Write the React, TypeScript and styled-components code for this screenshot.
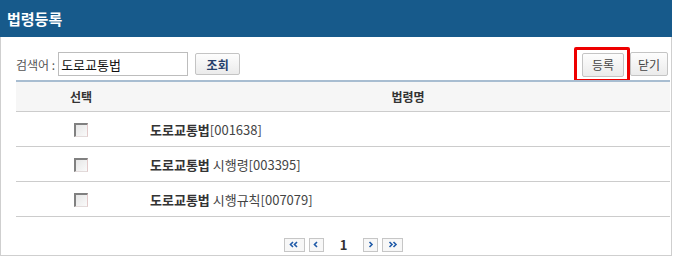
import React from "react";
import styled, { createGlobalStyle } from "styled-components";

const GlobalStyle = createGlobalStyle`
    html, body {
        margin: 0;
        padding: 0;
        background: #ffffff;
    }
    body {
        font-family: "Noto Sans CJK KR", "Noto Sans", sans-serif;
        font-size: 12px;
        color: #333333;
    }
    * {
        box-sizing: border-box;
    }
`;

const Frame = styled.div`
    width: 672px;
    height: 256px;
    border: 1px solid #cfcfcf;
    border-top: none;
    display: flex;
    flex-direction: column;
    background: #ffffff;
`;

const TitleBar = styled.div`
    height: 37px;
    flex-shrink: 0;
    background-color: #175a8b;
    color: #ffffff;
    font-size: 15px;
    font-weight: 700;
    display: flex;
    align-items: center;
    padding-left: 7px;
    margin: 0 -1px;
`;

const Body = styled.div`
    padding: 15px 0 0 15px;
    display: flex;
    flex-direction: column;
`;

const Toolbar = styled.div`
    display: flex;
    align-items: center;
    height: 24px;
    margin-bottom: 4px;
    padding-right: 3px;
`;

const Label = styled.span`
    color: #555555;
    font-size: 12px;
    margin-right: 3px;
`;

const SearchInput = styled.input`
    width: 130px;
    height: 24px;
    border: 1px solid #bdbdbd;
    padding: 0 2px;
    font-family: inherit;
    font-size: 13px;
    color: #111111;
    outline: none;
`;

const Button = styled.button<{ $bold?: boolean }>`
    height: 22px;
    padding: 0;
    border: 1px solid #c4c4c4;
    border-radius: 2px;
    background: linear-gradient(#fdfdfd, #ebebeb);
    font-family: inherit;
    font-size: 12px;
    white-space: nowrap;
    font-weight: ${props => (props.$bold ? 700 : 400)};
    color: ${props => (props.$bold ? "#253f6b" : "#444444")};
    display: flex;
    align-items: center;
    justify-content: center;
    cursor: pointer;
`;

const SearchButton = styled(Button)`
    width: 45px;
    margin-left: 7px;
`;

const Spacer = styled.div`
    flex: 1;
`;

const Highlight = styled.div`
    border: 3px solid #ee0000;
    border-radius: 2px;
    padding: 3px 3px 2px 5px;
    display: flex;
`;

const ActionButton = styled(Button)`
    height: 24px;
    width: 42px;
`;

const CloseButton = styled(ActionButton)`
    width: 38px;
`;

const Table = styled.div`
    border-top: 2px solid #a8bdd1;
    margin-right: 1px;
`;

const HeadRow = styled.div`
    display: grid;
    grid-template-columns: 130px 1fr;
    height: 30px;
    background: #f6f6f6;
    border-bottom: 1px solid #cccccc;
    font-weight: 700;
    color: #333333;
`;

const Row = styled.div`
    display: grid;
    grid-template-columns: 130px 1fr;
    height: 35px;
    border-bottom: 1px solid #cccccc;
`;

const Cell = styled.div<{ $center?: boolean }>`
    display: flex;
    align-items: center;
    justify-content: ${props => (props.$center ? "center" : "flex-start")};
    padding-left: ${props => (props.$center ? "0" : "4px")};
    font-size: 12px;
    white-space: pre;
`;

const Check = styled.span`
    width: 14px;
    height: 14px;
    border-top: 2px solid #808080;
    border-left: 2px solid #808080;
    border-right: 1px solid #e2caca;
    border-bottom: 1px solid #e2dada;
    background: linear-gradient(135deg, #e6e6e6, #fafafa);
    margin-top: 1px;
`;

const LawTitle = styled.span`
    font-size: 13px;
    color: #444444;
`;

const LawName = styled.b`
    font-weight: 700;
    color: #333333;
`;

const Pager = styled.div`
    display: flex;
    justify-content: center;
    align-items: center;
    margin-top: 18px;
    gap: 4px;
`;

const PageButton = styled.span<{ $wide?: boolean }>`
    width: ${props => (props.$wide ? "21px" : "15px")};
    height: 14px;
    border: 1px solid #c6c6c6;
    background: #f7f7f7;
    display: flex;
    align-items: center;
    justify-content: center;
`;

const PageNumber = styled.span`
    font-size: 13px;
    font-weight: 700;
    color: #333333;
    margin: 0 12px;
`;

function Arrow({ dir, double }: { dir: "left" | "right"; double?: boolean }) {
    const one = dir === "left" ? "M4 1 L1.5 3.5 L4 6" : "M1.5 1 L4 3.5 L1.5 6";
    return (
        <svg width={double ? 10 : 6} height="7" viewBox={double ? "0 0 10 7" : "0 0 6 7"}>
            <path d={one} stroke="#1f5aa8" strokeWidth="1.6" fill="none" />
            {double && (
                <path d={one} transform="translate(4 0)" stroke="#1f5aa8" strokeWidth="1.6" fill="none" />
            )}
        </svg>
    );
}

const laws = [
    { name: "도로교통법", rest: "[001638]" },
    { name: "도로교통법", rest: " 시행령[003395]" },
    { name: "도로교통법", rest: " 시행규칙[007079]" },
];

export default function App() {
    return (
        <>
            <GlobalStyle />
            <Frame>
                <TitleBar>법령등록</TitleBar>
                <Body>
                    <Toolbar>
                        <Label>검색어 :</Label>
                        <SearchInput defaultValue="도로교통법" />
                        <SearchButton $bold>조회</SearchButton>
                        <Spacer />
                        <Highlight>
                            <ActionButton>등록</ActionButton>
                        </Highlight>
                        <CloseButton>닫기</CloseButton>
                    </Toolbar>
                    <Table>
                        <HeadRow>
                            <Cell $center>선택</Cell>
                            <Cell $center>법령명</Cell>
                        </HeadRow>
                        {laws.map((law, i) => (
                            <Row key={i}>
                                <Cell $center>
                                    <Check />
                                </Cell>
                                <Cell>
                                    <LawTitle>
                                        <LawName>{law.name}</LawName>
                                        {law.rest}
                                    </LawTitle>
                                </Cell>
                            </Row>
                        ))}
                    </Table>
                    <Pager>
                        <PageButton $wide><Arrow dir="left" double /></PageButton>
                        <PageButton><Arrow dir="left" /></PageButton>
                        <PageNumber>1</PageNumber>
                        <PageButton><Arrow dir="right" /></PageButton>
                        <PageButton $wide><Arrow dir="right" double /></PageButton>
                    </Pager>
                </Body>
            </Frame>
        </>
    );
}
